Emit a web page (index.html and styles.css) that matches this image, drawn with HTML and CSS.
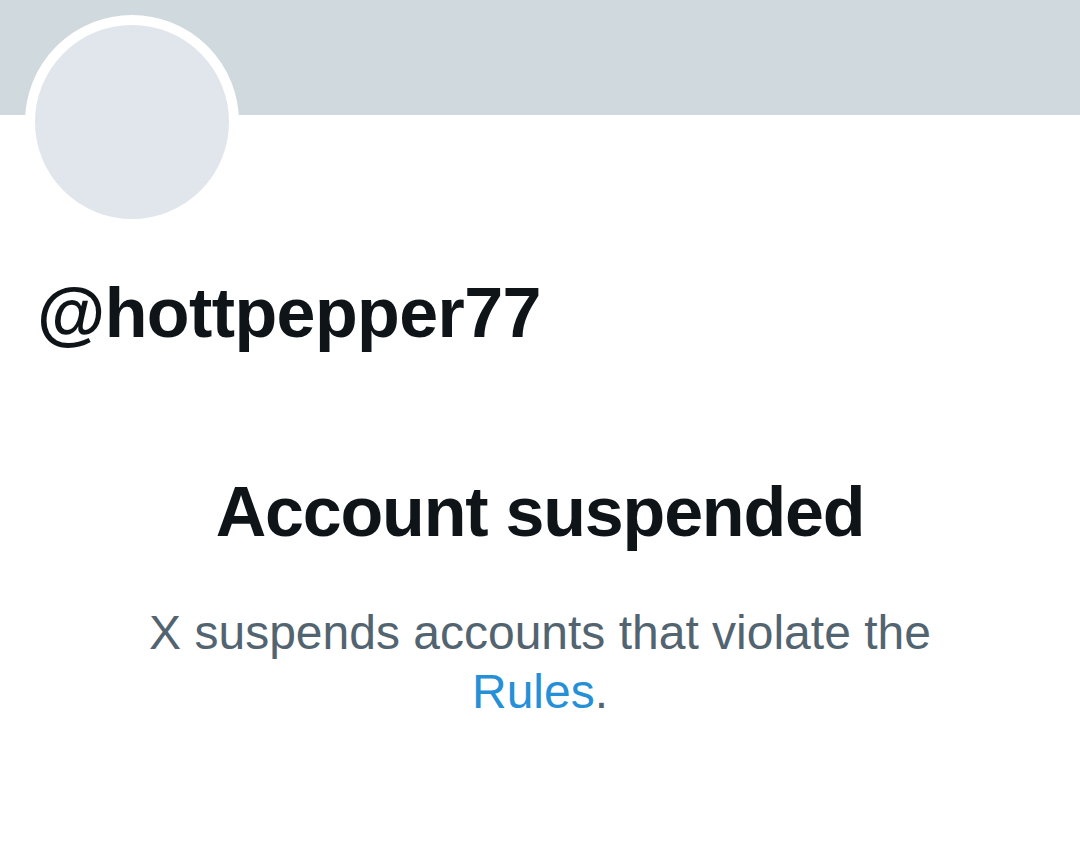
FILE: index.html
```html
<!DOCTYPE html>
<html lang="en">
<head>
    <meta charset="UTF-8">
    <meta name="viewport" content="width=device-width, initial-scale=1.0">
    <title>@hottpepper77 / X</title>
    <link rel="stylesheet" href="styles.css">
</head>
<body>
    <div class="banner"></div>
    <div class="avatar"></div>
    <div class="handle">@hottpepper77</div>
    <div class="notice">
        <h2>Account suspended</h2>
        <p>X suspends accounts that violate the <a href="#">Rules</a>.</p>
    </div>
</body>
</html>
```

FILE: styles.css
```css
body {
    margin: 0;
    font-family: "Liberation Sans", Arial, sans-serif;
    background-color: #fff;
    color: #0f1419;
}
.banner {
    height: 115px;
    background-color: #cfd9de;
}
.avatar {
    width: 194px;
    height: 194px;
    margin: -100px 0 0 25px;
    border: 10px solid #fff;
    border-radius: 50%;
    background-color: #e0e6eb;
}
.handle {
    margin: 42px 0 0 37px;
    font-size: 70px;
    font-weight: bold;
    line-height: 84px;
    letter-spacing: -0.6px;
}
.notice {
    margin-top: 115px;
    text-align: center;
}
.notice h2 {
    margin: 0;
    font-size: 70px;
    line-height: 84px;
    letter-spacing: -1.2px;
}
.notice p {
    max-width: 800px;
    margin: 49px auto 0;
    font-size: 48px;
    line-height: 59px;
    color: #536471;
}
.notice a {
    color: #2690d6;
    text-decoration: none;
}
```
